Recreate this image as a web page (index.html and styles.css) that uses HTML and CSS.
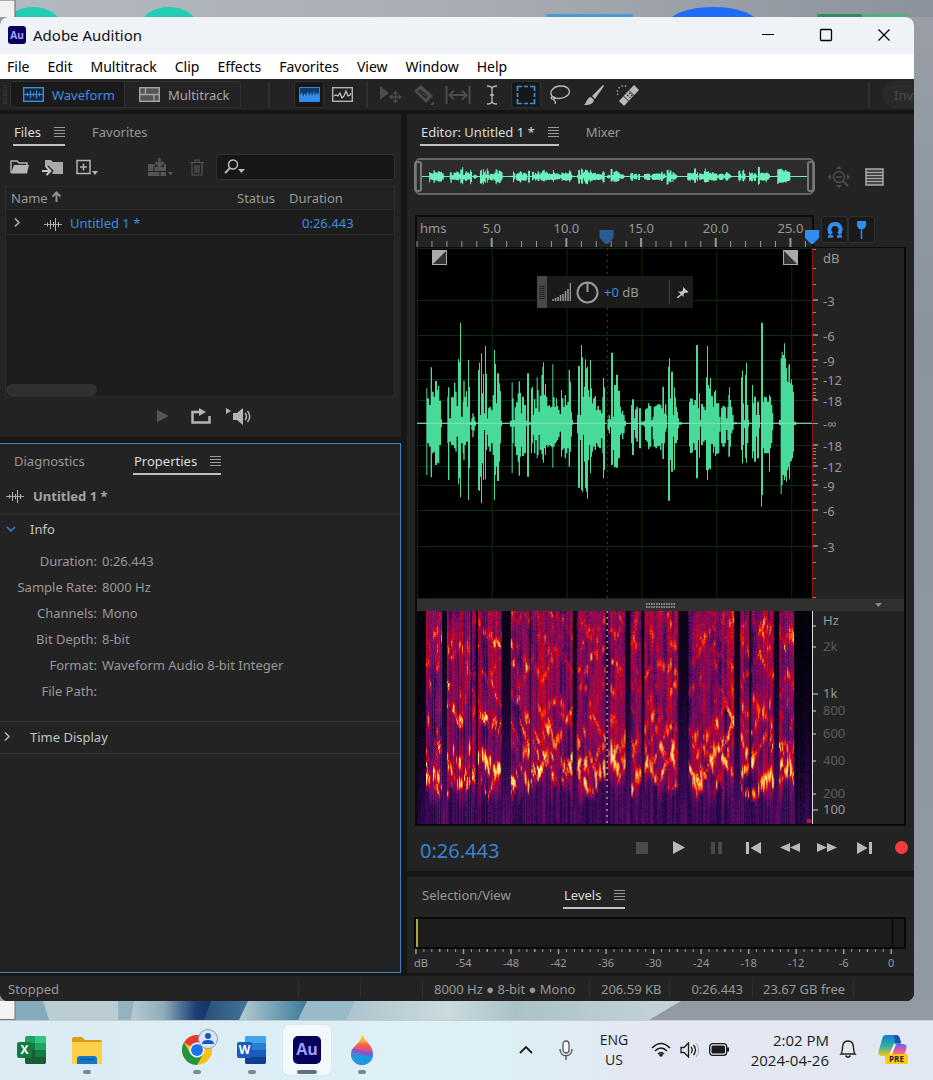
FILE: index.html
```html
<!DOCTYPE html>
<html lang="en">
<head>
<meta charset="utf-8">
<meta name="viewport" content="width=device-width, initial-scale=1">
<title>Adobe Audition</title>
<link rel="stylesheet" href="styles.css">
</head>
<body>
<svg width="0" height="0" class="defs" aria-hidden="true">
  <symbol id="menu" viewBox="0 0 11 11"><path d="M0 1.500h11M0 4.500h11M0 7.500h11M0 10.500h11" stroke="#999" stroke-width="1"/></symbol>
  <symbol id="wave" viewBox="0 0 18 14"><path d="M0 7.500h18" stroke="#a5a5a5"/><path d="M3.500 5.500v4M6.500 3v9M9.500 5v5M11.500 1v13M14.500 5v5" stroke="#b5b5b5" stroke-width="1"/></symbol>
</svg>
<div class="desktop-top" aria-hidden="true">
  <svg width="100%" height="17">
    <ellipse cx="33" cy="26" rx="28" ry="19" fill="#22cdb4"/><ellipse cx="169" cy="26" rx="28" ry="19" fill="#22cdb4"/>
    <rect x="-1" y="0" width="16" height="20" fill="#f1f1f1" stroke="#666"/>
    <rect x="546" y="14" width="87" height="6" rx="2" fill="#4a9bd5"/>
    <ellipse cx="713" cy="25" rx="46" ry="18" fill="#1f6cf8"/>
    <rect x="817" y="14" width="90" height="6" rx="2" fill="#49b07e"/><rect x="817" y="14" width="45" height="6" rx="2" fill="#2e8b60"/>
  </svg>
</div>
<main class="window">
  <header class="titlebar">
    <svg width="18" height="18" viewBox="0 0 18 18"><rect width="18" height="18" rx="3" fill="#08005c"/><text x="9" y="13" text-anchor="middle" class="au-small">Au</text></svg>
    <h1>Adobe Audition</h1>
    <div class="winbuttons">
      <button aria-label="Minimize"><svg width="14" height="14"><path d="M1 6.500h12" stroke="#000" stroke-width="1.200"/></svg></button>
      <button aria-label="Maximize"><svg width="14" height="14"><rect x="1.500" y="1.500" width="11" height="11" rx="1" fill="none" stroke="#000" stroke-width="1.300"/></svg></button>
      <button aria-label="Close"><svg width="14" height="14"><path d="M1.500 1.500l11 11M12.500 1.500l-11 11" stroke="#000" stroke-width="1.300"/></svg></button>
    </div>
  </header>
  <nav class="menubar"><button>File</button><button>Edit</button><button>Multitrack</button><button>Clip</button><button>Effects</button><button>Favorites</button><button>View</button><button>Window</button><button>Help</button></nav>
  <div class="toolbar">
    <svg width="4" height="20" class="grip"><path d="M1 0v20M3 0v20" stroke="#4a4a4a" stroke-dasharray="1 1"/></svg>
    <div class="modes">
      <button class="mode active"><svg width="21" height="15"><rect x=".7" y=".7" width="19.600" height="13.600" fill="#10243a" stroke="#3a8ee0" stroke-width="1.400"/><path d="M1 7.500h19M4.500 5.500v4M7.500 3.500v8M10.500 5.500v4M13.500 3.500v8M16.500 5.500v4" stroke="#3a8ee0" stroke-width="1.200"/></svg>Waveform</button>
      <button class="mode"><svg width="21" height="15"><rect x=".7" y=".7" width="19.600" height="13.600" fill="#555" stroke="#a5a5a5" stroke-width="1.400"/><path d="M1 7.500h19M6.500 1v6.500M15 7.500V14" stroke="#a5a5a5" stroke-width="1.400"/></svg>Multitrack</button>
    </div>
    <i class="vsep first"></i>
    <div class="views">
      <button class="tool active" aria-label="Spectral display"><svg width="21" height="15"><rect x=".5" y=".5" width="20" height="14" fill="#123a68" stroke="#2f84da"/><path d="M1 14V8l2-3 1 5 2-4 1 3 2-5 1 5 2-4 1 4 2-5 1 5 2-4 1 3 1-2v8z" fill="#2f8eef"/></svg></button>
      <button class="tool" aria-label="Pitch display"><svg width="21" height="15"><rect x=".7" y=".7" width="19.600" height="13.600" fill="#222" stroke="#b4b4b4" stroke-width="1.400"/><path d="M2 9l2-1 2 1 2-3 2 5 2-2 2-5 2 5 2-1 1-2" fill="none" stroke="#c8c8c8" stroke-width="1.200"/></svg></button>
    </div>
    <i class="vsep"></i>
    <div class="tools">
      <button class="tool" aria-label="Move"><svg width="24" height="20" viewBox="0 0 24 20"><path d="M2 1v14l9-7z" fill="#4c4c4c"/><path d="M17.500 7v10M12.500 12h10M15.500 9l2-2.500 2 2.500M15.500 15l2 2.500 2-2.500M14.500 10L12 12l2.500 2M20.500 10l2.500 2-2.500 2" fill="none" stroke="#4c4c4c" stroke-width="1.300"/></svg></button>
      <button class="tool" aria-label="Razor"><svg width="22" height="22" viewBox="0 0 22 22"><path d="M1 7l7-6 12 11-7 7z" fill="#4c4c4c"/><path d="M6 6.500l8 7" stroke="#232323" stroke-width="3"/><path d="M7 7.500l6 5" stroke="#4c4c4c"/><path d="M21 17v4h-4z" fill="#4c4c4c"/></svg></button>
      <button class="tool" aria-label="Slip"><svg width="26" height="20" viewBox="0 0 26 20"><path d="M1.500 1v18M24.500 1v18M5 10h16M9 5.500L4.500 10 9 14.500M17 5.500l4.500 4.500-4.500 4.500" fill="none" stroke="#4c4c4c" stroke-width="2"/></svg></button>
      <button class="tool" aria-label="Time selection"><svg width="12" height="20" viewBox="0 0 12 20"><path d="M1 1c3 0 5 1 5 3v12c0 2-2 3-5 3M11 1C8 1 6 2 6 4v12c0 2 2 3 5 3M4 10h4" fill="none" stroke="#b9b9b9" stroke-width="1.300"/></svg></button>
      <button class="tool active" aria-label="Marquee selection"><svg width="20" height="20" viewBox="0 0 20 20"><path d="M1.500 6V1.500H6M14 1.500h4.500V6M18.500 14v4.500H14M6 18.500H1.500V14M8 1.500h4M8 18.500h4M1.500 8v4M18.500 8v4" fill="none" stroke="#3a8ee0" stroke-width="1.700"/></svg></button>
      <button class="tool" aria-label="Lasso selection"><svg width="22" height="20" viewBox="0 0 22 20"><path d="M5 13C-2 8 4 1 12 1s12 7 4 11c-4 2-9 2-11 0-2-1-4 1-2 2s4-1 2-2M5 14c-1 2 3 2 1 5" fill="none" stroke="#b9b9b9" stroke-width="1.300"/></svg></button>
      <button class="tool" aria-label="Paintbrush"><svg width="22" height="22" viewBox="0 0 22 22"><path d="M20 1l1 1-9 13-3-3z" fill="#b9b9b9"/><path d="M8 13l3 3c-1 5-7 5-10 5 3-2 2-7 7-8z" fill="#b9b9b9"/></svg></button>
      <button class="tool" aria-label="Spot healing"><svg width="24" height="22" viewBox="0 0 24 22"><path d="M18 1l5 5L8 22l-5-5z" fill="#b9b9b9"/><path d="M7.500 12l5.500 5.500M13 6.500l5.500 5.500" stroke="#232323" stroke-width="1"/><path d="M11 11.500h1.500M13.500 13.500h1M13 9.500h1.500M15 11.500h1.500" stroke="#232323" stroke-width="1.500"/><path d="M2 11C-1 5 6-1 12 3" fill="none" stroke="#aaa" stroke-width="1.300" stroke-dasharray="1.500 2"/></svg></button>
    </div>
    <i class="vsep last"></i>
    <button class="pill">Inve</button>
  </div>

  <div class="workspace">
    <div class="column">
      <section class="panel files">
        <div class="tabs"><button class="tab active">Files <svg width="11" height="11"><use href="#menu"/></svg></button><button class="tab">Favorites</button></div>
        <div class="file-tools">
          <button aria-label="Open file"><svg width="20" height="16" viewBox="0 0 20 16"><path d="M1 14V2h6l2 2h8v2" fill="none" stroke="#b4b4b4" stroke-width="1.400"/><path d="M1 14.500L4 6h15l-2 8.500z" fill="#b4b4b4"/></svg></button>
          <button aria-label="Import file"><svg width="22" height="17" viewBox="0 0 22 17"><path d="M3 8V1h6l2 2h10v12H11z" fill="#a9a9a9"/><path d="M0 12h8M5 8l4 4-4 4" fill="none" stroke="#232323" stroke-width="4"/><path d="M0 12h7M4.500 8l4 4-4 4" fill="none" stroke="#c4c4c4" stroke-width="2"/></svg></button>
          <button aria-label="New file"><svg width="22" height="17" viewBox="0 0 22 17"><path d="M1 1.500h13v13H1zM7.500 4.500v7M4 8h7" fill="none" stroke="#b4b4b4" stroke-width="1.500"/><path d="M16 12h6l-3 4z" fill="#b4b4b4"/></svg></button>
          <button class="insert" aria-label="Insert into multitrack"><svg width="26" height="19" viewBox="0 0 26 19"><path d="M0 6h7v3h9V6h2v12H0z" fill="#555"/><path d="M0 13.500h18M6 8v5M12 13.500V18" stroke="#232323"/><path d="M11.500 0v7M7.500 4l4 4 4-4" fill="none" stroke="#555" stroke-width="2.500"/><path d="M20 14h5l-2.500 3.500z" fill="#555"/></svg></button>
          <button class="trash" aria-label="Delete"><svg width="14" height="17" viewBox="0 0 14 17"><path d="M0 3.500h14M5 3V1h4v2M2 4v12h10V4M5 6v8M7 6v8M9 6v8" fill="none" stroke="#555" stroke-width="1.200"/></svg></button>
          <label class="search"><svg width="22" height="16" viewBox="0 0 22 16"><circle cx="9" cy="5.500" r="4.500" fill="none" stroke="#b9b9b9" stroke-width="1.500"/><path d="M6 9l-5 5" stroke="#b9b9b9" stroke-width="1.800"/><path d="M14 10h7l-3.500 4z" fill="#b9b9b9"/></svg><input type="search" aria-label="Search files"></label>
        </div>
        <div class="filebox">
          <table>
            <thead><tr><th>Name<svg width="11" height="12" viewBox="0 0 11 12"><path d="M5.500 11V2M1.500 5.500l4-4 4 4" fill="none" stroke="#909090" stroke-width="2"/></svg></th><th class="c-status">Status</th><th class="c-dur">Duration</th></tr></thead>
            <tbody><tr><td><svg width="6" height="9" class="chev"><path d="M1 0.500l4 4-4 4" fill="none" stroke="#b5b5b5" stroke-width="1.500"/></svg><svg width="18" height="14"><use href="#wave"/></svg><span>Untitled 1 *</span></td><td></td><td class="dur">0:26.443</td></tr></tbody>
          </table>
          <div class="scroll-thumb"></div>
        </div>
        <div class="preview">
          <button class="play" aria-label="Play"><svg width="12" height="12"><path d="M0 0l12 6-12 6z" fill="#555"/></svg></button>
          <button aria-label="Loop"><svg width="20" height="16" viewBox="0 0 20 16"><path d="M6 4H1.500v10.500h17V8" fill="none" stroke="#b4b4b4" stroke-width="2.500"/><path d="M8 0l7 4-7 4zM4 2.800h6v2.500H4z" fill="#b4b4b4"/></svg></button>
          <button aria-label="Auto-play"><svg width="26" height="17" viewBox="0 0 26 17"><path d="M0 0l5 3-5 3zM7 5h4l6-5v17l-6-5H7z" fill="#b4b4b4"/><path d="M19 5q3 3.500 0 7M21.500 3q4.500 5.500 0 11" fill="none" stroke="#b4b4b4" stroke-width="1.500"/></svg></button>
        </div>
      </section>
      <section class="panel properties">
        <div class="tabs"><button class="tab diag">Diagnostics</button><button class="tab active">Properties <svg width="11" height="11"><use href="#menu"/></svg></button></div>
        <div class="prop-file"><svg width="18" height="14"><use href="#wave"/></svg><strong>Untitled 1 *</strong></div>
        <button class="fold"><svg width="10" height="6"><path d="M1 1l4 4 4-4" fill="none" stroke="#2f84da" stroke-width="1.500"/></svg>Info</button>
        <dl><dt>Duration:</dt><dd>0:26.443</dd><dt>Sample Rate:</dt><dd>8000 Hz</dd><dt>Channels:</dt><dd>Mono</dd><dt>Bit Depth:</dt><dd>8-bit</dd><dt>Format:</dt><dd>Waveform Audio 8-bit Integer</dd><dt>File Path:</dt><dd></dd></dl>
        <button class="fold time"><svg width="10" height="9"><path d="M1 .5l4 4-4 4" fill="none" stroke="#b5b5b5" stroke-width="1.500"/></svg>Time Display</button>
      </section>
    </div>

    <div class="column">
      <section class="panel editor">
        <div class="tabs"><button class="tab active">Editor: Untitled 1 * <svg width="11" height="11"><use href="#menu"/></svg></button><button class="tab">Mixer</button></div>
        <div class="split overview-row">
          <div class="overview"><svg id="overview" width="100%" height="33" viewBox="0 -180 1188 360" preserveAspectRatio="none"></svg><i class="handle left"></i><i class="handle right"></i></div>
          <div class="side">
            <button aria-label="Zoom out full"><svg width="22" height="22" viewBox="0 0 22 22"><circle cx="11" cy="11" r="5.500" fill="none" stroke="#4c4c4c" stroke-width="1.500"/><path d="M8 11h6" stroke="#4c4c4c" stroke-width="1.500"/><path d="M15 15l5 5" stroke="#4c4c4c" stroke-width="2"/><path d="M11 0l3 3H8zM11 22l3-3H8zM0 11l3-3v6zM22 11l-3-3v6z" fill="#4c4c4c"/></svg></button>
            <button aria-label="Track list"><svg width="19" height="18"><path d="M1 1h17v16H1z" fill="#484848" stroke="#aaa" stroke-width="1.500"/><path d="M1 4.500h17M1 7.500h17M1 10.500h17M1 13.500h17" stroke="#aaa"/></svg></button>
          </div>
        </div>
        <div class="split">
          <div class="ruler"><svg id="ruler" width="100%" height="30"></svg></div>
          <div class="side snap"><button aria-label="Snapping"><svg width="16" height="18" viewBox="0 0 16 18"><path d="M4.500 13C1 10 2 3 8 3S15 10 11.500 13" fill="none" stroke="#2f8eef" stroke-width="4"/><path d="M1 15.500h5M10 15.500h5" stroke="#2f8eef" stroke-width="2.500"/></svg></button><button aria-label="Playhead"><svg width="11" height="18"><path d="M1 0h9v5L8 8H3L1 5z" fill="#2f8eef"/><path d="M5.500 7v11" stroke="#2f8eef" stroke-width="1.500"/></svg></button></div>
        </div>
        <div class="stage">
          <div class="split">
            <div class="plot">
              <svg id="waveform" width="100%" height="351" viewBox="0 0 1188 1053" preserveAspectRatio="none"></svg>
              <svg class="fade in" width="15" height="15"><path d="M0 0h15v15H0z" fill="#aaa"/><path d="M14 1v13H1z" fill="#333"/></svg>
              <svg class="fade out" width="15" height="15"><path d="M0 0h15v15H0z" fill="#aaa"/><path d="M1 1v13h13z" fill="#333"/></svg>
              <div class="hud">
                <svg width="10" height="32"><rect width="10" height="32" fill="#484848"/><path d="M3.500 10v13M6.500 10v13" stroke="#111" stroke-width="2" stroke-dasharray="1 1"/></svg>
                <svg width="19" height="18"><path d="M1 18v-2M3.500 18v-3M6 18v-4M8.500 18v-6M11 18v-7M13.500 18v-10M16 18V6M18.500 18V0" stroke="#999" stroke-width="1.500"/></svg>
                <svg width="23" height="23"><circle cx="11.500" cy="11.500" r="10" fill="none" stroke="#999" stroke-width="2"/><path d="M11.500 2v9" stroke="#999" stroke-width="2"/></svg>
                <span><b>+0</b> dB</span><i></i>
                <svg width="12" height="12"><path d="M6 1l5.500 5-2 1-1.500-.5-1.500 1.500v3L2.500 7 1 5.500h3.500L6 4z" fill="#c5c5c5"/><path d="M5 8l-5 4" stroke="#c5c5c5" stroke-width="1.500"/></svg>
              </div>
            </div>
            <svg id="dbscale" class="scale" width="100%" height="351"></svg>
          </div>
          <div class="splitter"><svg width="30" height="5"><path d="M0 1h30M0 4h30" stroke="#aaa" stroke-width="1.500" stroke-dasharray="1.500 1"/></svg><svg class="drop" width="7" height="4"><path d="M0 0h7L3.500 4z" fill="#888"/></svg></div>
          <div class="split">
            <div class="spectro"><canvas id="spectrogram" width="396" height="213"></canvas></div>
            <svg id="hzscale" class="scale hz" width="100%" height="213"></svg>
          </div>
        </div>
        <div class="transport">
          <output>0:26.443</output>
          <div class="keys">
            <button aria-label="Stop"><svg width="12" height="12"><rect width="12" height="12" fill="#4a4a4a"/></svg></button>
            <button aria-label="Play"><svg width="12" height="13"><path d="M0 0l12 6.500L0 13z" fill="#b9b9b9"/></svg></button>
            <button aria-label="Pause"><svg width="11" height="12"><path d="M0 0h4v12H0zM7 0h4v12H7z" fill="#4a4a4a"/></svg></button>
            <button aria-label="To start"><svg width="15" height="12"><path d="M0 0h3v12H0zM15 0v12L4.500 6z" fill="#b9b9b9"/></svg></button>
            <button aria-label="Rewind"><svg width="20" height="9"><path d="M10 0v9L0 4.500zM20 0v9l-10-4.500z" fill="#b9b9b9"/></svg></button>
            <button aria-label="Fast forward"><svg width="20" height="9"><path d="M0 0l10 4.500L0 9zM10 0l10 4.500L10 9z" fill="#b9b9b9"/></svg></button>
            <button aria-label="To end"><svg width="15" height="12"><path d="M12 0h3v12h-3zM0 0l10.500 6L0 12z" fill="#b9b9b9"/></svg></button>
            <button aria-label="Record"><svg width="13" height="13"><circle cx="6.500" cy="6.500" r="6.500" fill="#f43c3c"/></svg></button>
          </div>
        </div>
      </section>
      <section class="panel levels">
        <div class="tabs"><button class="tab selview">Selection/View</button><button class="tab active">Levels <svg width="11" height="11"><use href="#menu"/></svg></button></div>
        <div class="meter"><i></i></div>
        <svg id="meterscale" width="100%" height="24"></svg>
      </section>
    </div>
  </div>
  <footer class="status"><span class="grow">Stopped</span><span class="blank"></span><span class="blank"></span><span class="fmt">8000 Hz ● 8-bit ● Mono</span><span class="size">206.59 KB</span><span class="len">0:26.443</span><span class="free">23.67 GB free</span><span class="tail"></span></footer>
</main>
<svg class="wallpaper" width="100%" height="19" viewBox="0 0 933 19" preserveAspectRatio="none" aria-hidden="true">
  <defs>
    <linearGradient id="navy" gradientUnits="userSpaceOnUse" x1="131" x2="212"><stop stop-color="#b7cbd0"/><stop offset=".4" stop-color="#8fabbc"/><stop offset=".8" stop-color="#1c4074"/><stop offset="1" stop-color="#123264"/></linearGradient>
    <linearGradient id="mid" gradientUnits="userSpaceOnUse" x1="206" x2="248"><stop stop-color="#2a507a"/><stop offset="1" stop-color="#44759a"/></linearGradient>
    <linearGradient id="teal" gradientUnits="userSpaceOnUse" x1="242" x2="306"><stop stop-color="#b0c8d0"/><stop offset="1" stop-color="#3f7c9b"/></linearGradient>
    <linearGradient id="pale" gradientUnits="userSpaceOnUse" x1="350" x2="680"><stop stop-color="#adc5cf"/><stop offset=".3" stop-color="#c9dbdc"/><stop offset=".5" stop-color="#a9c2c8"/><stop offset="1" stop-color="#c6d4d8"/></linearGradient>
  </defs>
  <path d="M0 0h933v19H0z" fill="#949aa2"/><path d="M0 0h46l6 19H0z" fill="#86abbd"/>
  <path d="M43 0h92v19H49z" fill="#b9cdd2"/><path d="M118 0h18v19h-18z" fill="#94b3c0"/>
  <path d="M134 0h90v19h-93z" fill="url(#navy)"/><path d="M211 0h50v19h-57z" fill="url(#mid)"/>
  <path d="M248 0h70v19h-79z" fill="url(#teal)"/><path d="M307 0h60v19h-69z" fill="#98bac9"/>
  <path d="M355 0h326l-32 19H346z" fill="url(#pale)"/>
  <path d="M-1-1h16v19.500H-1z" fill="#f3f3f3" stroke="#777"/>
</svg>
<nav class="taskbar">
  <div class="apps">
    <button aria-label="Excel"><svg width="30" height="28" viewBox="0 0 30 28"><rect x="8" width="21" height="28" rx="2" fill="#21a366"/><path d="M18 0h9q2 0 2 2v5H18z" fill="#33c481"/><path d="M8 7h10v7H8z" fill="#107c41"/><path d="M8 14h21v12q0 2-2 2H10q-2 0-2-2z" fill="#185c37"/><path d="M18 14h11v7H18z" fill="#107c41"/><rect y="6" width="15" height="16" rx="2" fill="#107c41"/><text x="7.500" y="18" text-anchor="middle" class="glyph">X</text></svg></button>
    <button class="running" aria-label="File Explorer"><svg width="30" height="27" viewBox="0 0 30 27"><path d="M0 2q0-2 2-2h8l3 3h15q2 0 2 2v6H0z" fill="#dc9c12"/><rect y="5" width="30" height="22" rx="1" fill="#fcd04a"/><path d="M5 27v-5q0-3 3-3h14q3 0 3 3v5z" fill="#1478c8"/><path d="M8 22.500h14" stroke="#0a5799" stroke-width="1.500"/></svg></button>
    <span class="slot"></span>
    <button class="running chrome" aria-label="Chrome"><svg width="36" height="36" viewBox="0 0 36 36"><circle cx="15" cy="21" r="15" fill="#fbc116"/><path d="M15 21L2 13.500A15 15 0 0 1 28 13.500H15z" fill="#e33b2e"/><path d="M2 13.500A15 15 0 0 0 15 36l6.500-11.300L15 21l-6.500 3.700z" fill="#229342"/><circle cx="15" cy="21" r="7.500" fill="#fff"/><circle cx="15" cy="21" r="6" fill="#1a73e8"/><circle cx="26" cy="10" r="9.500" fill="#d6e5fb" stroke="#8b9bb0"/><circle cx="26" cy="7" r="3" fill="#1758b8"/><path d="M20 15q0-4 6-4t6 4z" fill="#1758b8"/></svg></button>
    <button class="running" aria-label="Word"><svg width="30" height="28" viewBox="0 0 30 28"><rect x="8" width="21" height="28" rx="2" fill="#2b7cd3"/><path d="M10 0h17q2 0 2 2v5H8V2q0-2 2-2z" fill="#41a5ee"/><path d="M8 14h21v7H8z" fill="#185abd"/><path d="M8 21h21v5q0 2-2 2H10q-2 0-2-2z" fill="#103f91"/><rect y="6" width="15" height="16" rx="2" fill="#185abd"/><text x="7.500" y="18" text-anchor="middle" class="glyph">W</text></svg></button>
    <button class="running current" aria-label="Adobe Audition"><svg width="28" height="28"><rect width="28" height="28" rx="5" fill="#07005a"/><text x="14" y="19" text-anchor="middle" class="au-big">Au</text></svg></button>
    <button class="running" aria-label="Paint 3D"><svg width="24" height="32" viewBox="0 0 24 32"><defs><linearGradient id="drop" x2="0" y2="1"><stop stop-color="#ffcb2f"/><stop offset=".22" stop-color="#fdb437"/><stop offset=".34" stop-color="#f5604e"/><stop offset=".6" stop-color="#d84a8c"/></linearGradient></defs><path d="M12 0c2 7 11 11 11 20a11 11 0 0 1-22 0C1 12 12 9 12 0z" fill="url(#drop)"/><path d="M1 19c7-1 11 5 22-1 1 8-5 13-11 13S1 26 1 19z" fill="#1b98e0"/><path d="M2 17c8-2 11 5 20 2" fill="none" stroke="#8a58c6" stroke-width="4"/></svg></button>
  </div>
  <div class="tray">
    <button class="w40" aria-label="Show hidden icons"><svg width="14" height="9"><path d="M1 8l6-6 6 6" fill="none" stroke="#1b1b1b" stroke-width="1.800"/></svg></button>
    <button class="w40" aria-label="Microphone"><svg width="14" height="20"><rect x="4" y="1" width="6" height="12" rx="3" fill="#fff" stroke="#555" stroke-width="1.300"/><path d="M1 9c0 9 12 9 12 0M7 16v4" fill="none" stroke="#555" stroke-width="1.400"/></svg></button>
    <button class="lang">ENG<br>US</button>
    <button class="sys" aria-label="Network, volume and battery">
      <svg width="20" height="15"><path d="M1 6q9-9 18 0M4 9q6-6 12 0M7 12q3-3 6 0" fill="none" stroke="#1b1b1b" stroke-width="1.500"/><circle cx="10" cy="13" r="1.800" fill="#1b1b1b"/></svg>
      <svg width="20" height="16"><path d="M1 5.500h3L8.500 1v14L4 10.500H1z" fill="none" stroke="#1b1b1b" stroke-width="1.300"/><path d="M11 5q2.500 3 0 6M13.500 3q4 5 0 10" fill="none" stroke="#1b1b1b" stroke-width="1.300"/><path d="M16 1q5 7 0 14" fill="none" stroke="#aab" /></svg>
      <svg width="21" height="13"><rect x=".7" y=".7" width="17" height="11.600" rx="3" fill="none" stroke="#1b1b1b" stroke-width="1.300"/><rect x="2.500" y="2.500" width="13.500" height="8" rx="1.500" fill="#1b1b1b"/><path d="M19 4.500v4" stroke="#1b1b1b" stroke-width="2"/></svg>
    </button>
    <button class="clock"><time>2:02 PM<br>2024-04-26</time></button>
    <button class="w38" aria-label="Notifications"><svg width="18" height="19"><path d="M2 14c3-3-1-13 7-13s4 10 7 13zM6.500 15.500q2.500 3.500 5 0" fill="none" stroke="#222" stroke-width="1.400"/></svg></button>
    <button class="copilot" aria-label="Copilot preview"><svg width="30" height="29" viewBox="0 0 30 29"><defs><linearGradient id="ca" x2="0" y2="1"><stop stop-color="#1976df"/><stop offset=".5" stop-color="#29b0a5"/><stop offset="1" stop-color="#f1c21e"/></linearGradient><linearGradient id="cb" x2="0" y2="1"><stop stop-color="#6b62e8"/><stop offset=".5" stop-color="#e356b7"/><stop offset="1" stop-color="#f68a50"/></linearGradient></defs><path d="M8 0h10q3 0 4 4l1 5h-6l-4 8q-1 4-5 4H4q-5 0-3-6L4 4Q5 0 8 0z" fill="url(#ca)"/><path d="M16 0h2q3 0 4 4l1 4h-6z" fill="#1750b8"/><path d="M17 9h8q5 0 3 6l-2 6H12l3-9q1-3 2-3z" fill="url(#cb)"/><path d="M17 9l-5 12" stroke="#fff" stroke-width="2"/><rect x="7" y="19" width="23" height="10" rx="2" fill="#ffc914"/><text x="18.500" y="27" text-anchor="middle" class="pre">PRE</text></svg></button>
  </div>
</nav>
<script src="script.js"></script>
</body>
</html>
```

FILE: styles.css
```css
* { box-sizing: border-box; }
body {
  margin: 0; min-height: 100vh; display: flex; flex-direction: column; overflow-x: hidden;
  font-family: "Noto Sans", "Open Sans", sans-serif; font-size: 13px; line-height: 18px; color: #989898;
  background: linear-gradient(180deg, #9a9fa7, #8b939d 30%, #929aa3);
}
.defs { position: absolute; }
svg, canvas { display: block; flex: none; }
button { font: inherit; color: inherit; background: none; border: 0; padding: 0; margin: 0; }
.desktop-top { height: 17px; background: linear-gradient(90deg, #b3b9c1, #a9adb3 50%, #8b929b); }
.window { flex: 1; margin-right: 19px; display: flex; flex-direction: column; background: #161616; border-radius: 8px; overflow: hidden; }

.titlebar { height: 37px; display: flex; align-items: center; padding: 0 0 1px 8px; background: #eff3f8; color: #111; }
.titlebar h1 { margin: 0 0 0 7px; font: 400 15px/20px "Noto Sans", sans-serif; }
.winbuttons { margin-left: auto; display: flex; padding-right: 1px; }
.winbuttons button { width: 58px; height: 36px; display: grid; place-items: center; }
.au-small { font: bold 10px "Open Sans", sans-serif; fill: #a9a5ff; }
.au-big { font: bold 16px "Open Sans", sans-serif; fill: #9f9bff; }
.menubar { height: 25px; padding: 0 7px; display: flex; align-items: center; gap: 18px; background: #fff; color: #000; font: 14px/20px "Noto Sans", sans-serif; }

.toolbar { height: 31px; display: flex; align-items: center; background: #232323; overflow: hidden; }
.grip { margin-left: 3px; }
.modes { display: flex; margin-left: 3px; border: 1px solid #303030; border-radius: 3px; }
.mode { height: 25px; width: 115px; padding: 0 8px 0 14px; display: flex; align-items: center; gap: 8px; color: #a8a8a8; }
.mode.active { width: 114px; padding-left: 12px; background: #1a1a1a; color: #3a8ee0; border-right: 1px solid #303030; }
.vsep { width: 2px; height: 26px; background: #303030; }
.vsep.first { margin-left: 27px; }
.views { display: flex; gap: 3px; margin: 0 9px 0 24px; }
.tools { display: flex; margin-left: 7px; gap: 4px; }
.tool { width: 30px; height: 27px; display: grid; place-items: center; border: 1px solid transparent; border-radius: 3px; }
.tool.active { background: #171717; border-color: #303030; }
.vsep.last { margin-left: auto; }
.pill { width: 50px; height: 27px; margin: 0 -18px 0 12px; padding-left: 12px; text-align: left; border-radius: 14px; background: #2a2a2a; color: #4a4a4a; }

.workspace { flex: 1; display: grid; grid-template-columns: minmax(0, 401fr) minmax(0, 507fr); gap: 6px; padding: 4px 0 3px; }
.column { display: flex; flex-direction: column; gap: 6px; min-width: 0; }
.panel { background: #232323; min-width: 0; }
.tabs { display: flex; padding: 8px 13px 0; gap: 26px; }
.tab { height: 24px; display: flex; gap: 13px; align-items: center; padding: 0 0 3px 1px; border-bottom: 2px solid transparent; white-space: nowrap; }
.tab.active { color: #dcdcdc; border-color: #c0c0c0; }

.files { height: 323px; }
.file-tools { display: flex; align-items: center; padding: 8px 6px 0 10px; }
.file-tools button { margin-right: 12px; }
.file-tools .insert { margin: 0 16px 0 38px; }
.search { flex: 1; min-width: 0; height: 26px; display: flex; align-items: center; gap: 6px; padding: 0 7px; border: 1px solid #303030; border-radius: 3px; background: #171717; }
.search input { flex: 1; min-width: 0; border: 0; background: none; color: #ccc; font: inherit; }
.filebox { margin: 6px 6px 0 5px; height: 211px; position: relative; border: 1px solid #2c2c2c; background: #1d1d1d; }
.filebox table { width: 100%; border-collapse: collapse; table-layout: fixed; }
.filebox th { height: 22px; padding: 0 5px; text-align: left; font-weight: 400; background: #222; }
.filebox th svg { display: inline-block; vertical-align: 0; margin-left: 3px; }
.c-status { width: 52px; }
.c-dur { width: 110px; }
.filebox td { height: 25px; padding: 2px 0 0; border: solid #2a2a2a; border-width: 1px 0; color: #3a8ee0; }
.filebox td svg { display: inline-block; vertical-align: middle; margin: 0 8px 0 0; }
.filebox td .chev { margin: -4px 24px 0 8px; }
.filebox .dur { padding-left: 18px; }
.scroll-thumb { position: absolute; left: 0; bottom: 0; width: 91px; height: 12px; border-radius: 6px; background: #303030; }
.preview { display: flex; justify-content: center; align-items: center; gap: 15px; height: 38px; padding-left: 8px; }
.preview .play { margin-right: 7px; }

.properties { flex: 1; border: 1px solid #3b82c9; border-left: 0; }
.properties .tabs { padding-top: 7px; }
.diag { width: 94px; }
.prop-file { display: flex; align-items: center; gap: 9px; padding: 3px 6px 0; height: 40px; border-bottom: 2px solid #2d2d2d; color: #a4a4a4; }
.fold { width: 100%; display: flex; align-items: center; gap: 14px; height: 28px; padding: 0 6px; color: #c4c4c4; }
dl { display: grid; grid-template-columns: 97px 1fr; column-gap: 5px; grid-auto-rows: 26px; align-items: center; margin: 0; padding: 5px 0 17px; border-bottom: 1px solid #333; }
dt { text-align: right; }
dd { margin: 0; }
.fold.time { height: 32px; padding: 0 4px 2px; gap: 16px; border-bottom: 1px solid #333; }

.editor { padding: 0 8px; display: flex; flex-direction: column; height: 757px; }
.editor .tabs { padding-left: 5px; }
.split { display: grid; grid-template-columns: minmax(0, 1fr) 92px; }
.overview-row { margin-top: 12px; }
.overview { position: relative; height: 37px; border: 2px solid #666; border-radius: 5px; background: #2c2c2c; padding: 0 3px; }
.overview path { fill: #6df0bd; }
.handle { position: absolute; top: 1px; bottom: 1px; width: 8px; border: 2px solid #777; border-radius: 3px; }
.handle.left { left: -3px; }
.handle.right { right: -3px; }
.side { display: flex; align-items: center; gap: 15px; padding-left: 14px; }
.ruler { margin-top: 20px; border: 2px solid #0a0a0a; border-bottom: 0; height: 32px; padding: 0; }
.ruler svg { overflow: visible; position: relative; z-index: 2; }
.ruler svg, .scale, #meterscale { font-size: 13px; }
.ruler text, .scale text, #meterscale text { fill: #989898; }
#meterscale text { font-size: 11px; }
.snap { padding: 21px 0 0 7px; gap: 0; align-items: flex-start; }
.snap button { width: 27px; height: 27px; display: grid; place-items: center; background: #1a1a1a; border: 1px solid #303030; border-radius: 3px; }
.stage { border: 2px solid #0a0a0a; border-top-width: 1px; }
.stage .split { grid-template-columns: minmax(0, 1fr) 91px; }
.plot { position: relative; background: #000; }
.fade { position: absolute; top: 2px; }
.fade.in { left: 15px; }
.fade.out { right: 15px; }
.hud { position: absolute; left: 50%; top: 28px; width: 156px; height: 32px; transform: translateX(-50%); display: flex; align-items: center; gap: 5px; background: #1b1b1b; }
.hud b { color: #3a8ee0; font-weight: 400; }
.hud i { margin-left: auto; width: 1px; height: 24px; background: #444; }
.hud svg:last-child { margin: 0 4px 0 2px; }
.scale .dim { fill: #5c5c5c; }
.splitter { position: relative; height: 12px; display: grid; place-items: center; background: #303030; }
.splitter .drop { position: absolute; right: 22px; top: 4px; }
.spectro { background: #000; border-right: 1px solid #ddd; }
.spectro canvas { width: 100%; height: 213px; }
.transport { flex: 1; display: flex; align-items: center; justify-content: space-between; padding: 4px 0 0 5px; margin-right: -8px; }
.transport output { font-size: 20px; line-height: 28px; color: #3a82d0; }
.keys { margin-bottom: 6px; display: flex; align-items: center; gap: 11px; }
.keys button { width: 26px; height: 22px; display: grid; place-items: center; }

.levels { height: 96px; padding: 0 8px 0 7px; }
.levels .tabs { padding: 8px 7px 0; gap: 0; }
.selview { width: 142px; }
.meter { height: 32px; margin-top: 8px; border: 2px solid #080808; background: #1c1c1c; display: flex; justify-content: space-between; }
.meter::before { content: ""; width: 2px; background: #aaa83a; }
.meter i { width: 12px; border-left: 1px solid #000; }

.status { height: 25px; display: flex; align-items: center; background: #232323; }
.status span { height: 16px; line-height: 16px; border-right: 1px solid #303030; white-space: nowrap; }
.status .grow { flex: 1; padding-left: 8px; }
.status .blank { width: 62px; }
.status .fmt { width: 167px; padding-left: 11px; }
.status .size { width: 80px; padding-left: 11px; }
.status .len { width: 83px; text-align: right; padding-right: 9px; }
.status .free { width: 101px; padding-left: 10px; }
.status .tail { width: 60px; border: 0; }

.wallpaper { height: 19px; }
.taskbar { height: 60px; display: flex; justify-content: space-between; border-top: 1px solid #c4ccd4; background: linear-gradient(90deg, #dcebf4, #dcf1f5 52%, #e3e8f2 68%, #e2e8f1); color: #1c1c1c; }
.apps { display: flex; gap: 7px; padding: 4px 0 0 8px; }
.apps button, .slot { position: relative; width: 48px; height: 50px; display: grid; place-items: center; border-radius: 5px; }
.apps .chrome { padding: 0 0 6px 6px; }
.apps .running::after { content: ""; position: absolute; bottom: 1px; left: 20px; width: 8px; height: 4px; border-radius: 2px; background: #7b8a92; }
.apps .current { background: #f3f8fc; box-shadow: 0 0 1px #aab; }
.apps .current::after { left: 14px; width: 20px; background: #5d7480; }
.glyph { font: bold 12px "Open Sans", sans-serif; fill: #fff; }
.pre { font: bold 8px "Open Sans", sans-serif; fill: #222; }
.tray { display: flex; align-items: center; padding-right: 14px; font: 15px/20px "Open Sans", sans-serif; }
.tray button { height: 48px; margin-bottom: 2px; display: grid; place-items: center; }
.tray .w40 { width: 40px; }
.tray .w38 { width: 38px; }
.tray .lang { width: 56px; font-size: 14px; }
.tray .sys { width: 96px; display: flex; align-items: center; justify-content: center; gap: 9px; }
.tray .clock { width: 91px; justify-items: end; text-align: right; }
.tray .copilot { width: 52px; }
```

FILE: script.js
```js
const NS = 'http://www.w3.org/2000/svg';
const add = (parent, tag, attrs, text) => {
  const node = document.createElementNS(NS, tag);
  for (const key in attrs) node.setAttribute(key, attrs[key]);
  if (text !== undefined) node.textContent = text;
  parent.appendChild(node);
};
const byId = id => document.getElementById(id);

// Peaks: start, end, height above and below the zero line, in thirds of a pixel.
const parse = (s, shift) => s.trim().split(/\s+/).map(p => {
  const [a, b, u, d] = p.split(',').map(Number);
  return [a + shift, b + shift, u, d];
});
const peaks = parse(`
49,52,105,155 52,57,75,60 57,62,55,70 62,66,168,162 66,71,95,90 71,75,80,85 75,81,127,125 81,84,100,118 84,88,112,120 88,93,68,65 93,96,12,12
112,114,80,60 114,118,108,170 118,123,15,55 123,132,78,65 132,136,122,75 136,140,95,85 140,144,52,40 144,147,193,183 147,150,185,165 150,153,302,222 153,158,20,60 158,160,65,90 160,164,128,110 164,168,80,65 168,171,97,55 171,174,50,55 174,177,190,230 177,180,110,135 180,184,5,5 184,187,15,20 187,191,30,42 191,194,20,22 194,198,6,8
204,207,160,200 207,210,182,203 210,213,25,160 213,216,210,240 216,219,90,120 219,222,148,170 222,225,30,20 225,228,232,168 228,231,148,80 231,234,15,35 234,238,45,70 238,243,50,85 243,248,40,60 248,252,85,95 252,255,220,230 255,258,178,155 258,261,60,130 261,267,150,173 267,270,120,115 270,273,97,60 273,276,8,8
300,305,8,10 305,308,123,150 308,311,75,60 311,314,10,10 314,318,48,70 318,323,63,95 323,326,90,115 326,330,126,157 330,333,92,100 333,336,30,70 336,342,80,98 342,348,55,90 348,351,8,8 351,357,150,160 357,362,4,6 363,366,105,90 366,369,110,60 369,372,25,35 372,376,73,90 376,380,45,50 380,383,138,105 383,386,100,95 386,389,35,35 389,394,83,80 394,397,145,92 397,399,170,110 399,402,183,118 402,405,85,75 405,408,118,95 408,412,80,65 412,416,52,72 416,420,55,65 420,424,48,68 424,427,50,72 427,430,177,133 430,434,78,70 434,438,50,60 438,441,75,55 441,445,52,50 445,449,40,42 449,453,28,25 453,456,100,100 456,460,75,80 460,464,50,75 464,468,85,105 468,472,55,90 472,476,65,75 476,480,160,130 480,483,125,85 483,486,35,40 486,489,10,5
501,504,25,30 504,510,172,193 510,513,25,50 513,516,235,200 516,519,198,205 519,522,80,35 522,525,110,115 525,528,192,195 528,531,165,205 531,534,170,226 534,537,100,110 537,540,80,65 540,543,190,150 543,546,105,100 546,549,60,85 549,554,75,70 554,558,82,80 558,562,40,60 562,567,52,70 567,573,40,75 573,577,30,45 577,579,80,90 579,582,136,165 582,585,108,140
592,596,12,20 596,600,25,30 600,603,12,12 603,609,212,125 609,612,20,80 612,618,115,132 618,624,146,133 624,630,98,105 630,633,50,35 633,636,30,30 636,640,38,48 640,644,25,30 644,648,8,8
663,666,55,60 666,672,72,95 672,675,15,20 675,679,42,45 679,684,50,55 687,693,45,75 693,701,5,5 701,705,8,10 705,709,42,50 709,714,45,55 714,718,60,78 718,724,52,70 724,728,10,10 728,731,20,48 731,736,50,70 736,741,53,75 741,750,57,68`, -21).concat(parse(`
60,64,55,80 64,67,45,60 67,72,110,107 72,75,30,60 75,79,57,25 79,81,25,15 84,87,170,232 87,90,195,232 90,93,75,110 93,99,155,145 99,102,25,40 102,105,108,140 105,108,78,60 108,111,50,60 111,114,35,50 114,117,15,15 117,125,4,4
147,150,65,70 150,155,75,90 155,159,73,87 159,163,55,60 163,168,70,80 168,174,235,165 174,177,45,50 177,180,90,103 180,183,10,10 183,189,58,65 189,194,50,55 194,198,40,50 198,201,138,140 201,204,232,170 204,207,115,140 207,210,105,135 210,213,137,138 213,219,83,62 219,222,50,90 222,225,95,70 225,228,100,98 228,232,60,92 232,238,60,90 238,242,20,25 243,247,45,60 247,254,52,70 254,258,48,60 258,262,15,20 262,265,50,50 265,267,85,100 267,270,108,100 270,273,70,70 273,277,50,30 277,281,25,20 281,291,3,3
303,306,138,80 306,309,158,120 309,312,60,65 312,315,10,15 315,318,145,105 318,321,182,118 321,325,55,60 325,327,10,10 336,339,115,105 339,342,60,85 342,348,80,115 348,351,25,40 351,357,65,105 357,360,25,15 363,366,302,250 366,369,302,215 369,372,65,75 372,376,80,90 376,381,78,90 381,387,65,90 387,390,85,145 390,393,80,75 393,397,55,60 397,400,30,20
417,422,10,5 422,425,195,213 425,428,215,185 428,432,205,155 432,435,240,170 435,438,195,160 438,441,165,175 441,445,125,140 445,447,175,130 447,450,178,168 450,453,120,115 453,456,132,112 456,459,115,105 459,462,95,85 462,469,5,5`, 669));
const wavePath = (mid, k, scale) => `M0 ${mid - k}H1188V${mid + k}H0Z` +
  peaks.map(([a, b, u, d]) => `M${a} ${mid - scale(u)}H${b}V${mid + scale(d)}H${a}Z`).join('');

const END = 26.443;
const dbLines = [52, 87, 112, 131, 152, 197, 218, 237, 262, 298];
const wf = byId('waveform');
const grid = y => add(wf, 'path', { d: `M0 ${y * 3}H1188`, stroke: '#0b2c0e', 'stroke-width': 3 });
[.5, ...dbLines.map(y => y + .5), 350.5].forEach(grid);
for (let s = 0; s <= 25; s += 5) add(wf, 'path', { d: `M${s / END * 1188 + 1} 0V1053`, stroke: '#0b2c0e', 'stroke-width': 3 });
add(wf, 'path', { d: wavePath(526, 1.5, v => v), fill: '#48da98' });
add(wf, 'path', { d: 'M0 526H1188', stroke: '#a3e8c2', 'stroke-width': 2 });
add(wf, 'path', { d: 'M571 0V1053', stroke: '#a01414', 'stroke-width': 3, 'stroke-dasharray': '6 12' });
add(wf, 'path', { d: 'M1186 0V1053', stroke: '#b01818', 'stroke-width': 3 });
add(byId('overview'), 'path', { d: wavePath(0, 6, v => 1.9 * v ** .7) });

const ruler = byId('ruler');
for (let s = 0; s <= 26; s++) {
  const x = s / END * 100 + '%', major = s && s % 5 === 0;
  add(ruler, 'line', { x1: x, x2: x, y1: major ? 21 : 24, y2: 30, stroke: '#999', 'stroke-width': major ? 2 : 1 });
  if (major) add(ruler, 'text', { x, y: 16, 'text-anchor': 'middle' }, s.toFixed(1));
}
add(ruler, 'text', { x: 3, y: 16 }, 'hms');
for (const [x, fill] of [['48%', '#285c94'], ['100%', '#2f8eef']]) {
  const holder = document.createElementNS(NS, 'svg');
  holder.setAttribute('x', x);
  holder.setAttribute('overflow', 'visible');
  add(holder, 'path', { d: 'M-7 13H7V21L1 27H-1L-7 21Z', fill });
  ruler.appendChild(holder);
}

const db = byId('dbscale');
add(db, 'text', { x: 10, y: 15 }, 'dB');
['-3', '-6', '-9', '-12', '-18', '-18', '-12', '-9', '-6', '-3'].forEach((t, i) => {
  add(db, 'line', { x1: 0, x2: 5, y1: dbLines[i], y2: dbLines[i], stroke: '#999', 'stroke-width': 1.5 });
  add(db, 'text', { x: 10, y: dbLines[i] + 6 }, t);
});
add(db, 'line', { x1: 0, x2: 5, y1: 175.5, y2: 175.5, stroke: '#999' });
add(db, 'text', { x: 10, y: 181 }, '-∞');
[1, 20, 36, 64, 76, 96, 104, 118, 124, 136, 140, 144, 147, 150].forEach(y => {
  for (const yy of [y, 350 - y]) add(db, 'line', { x1: 0, x2: 3, y1: yy + .5, y2: yy + .5, stroke: '#888' });
});
const hz = byId('hzscale');
[['Hz', 10], ['2k', 36], ['1k', 83], ['800', 100], ['600', 123], ['400', 150], ['200', 183], ['100', 199]].forEach(([t, y], i) => {
  add(hz, 'text', { x: 10, y: y + 4, class: [0, 2, 7].includes(i) ? '' : 'dim' }, t);
  add(hz, 'line', { x1: 0, x2: i === 2 || i === 7 ? 5 : 3, y1: i ? y : 15, y2: i ? y : 15, stroke: '#999', 'stroke-width': 1.5 });
});

const meter = byId('meterscale');
for (let v = 0; v <= 60; v++) {
  const x = .4 + v / 60 * 96.6 + '%', major = v % 6 === 0;
  add(meter, 'line', { x1: x, x2: x, y1: 0, y2: major ? 5 : 3, stroke: '#999', 'stroke-width': major || v % 3 === 0 ? 1.5 : 1 });
  if (major) add(meter, 'text', { x: v ? x : 0, y: 18, 'text-anchor': v ? 'middle' : 'start' }, v ? String(v - 60) : 'dB');
}

// Spectrogram: noise floor per column, plus formant tracks and slanted harmonics.
const W = 396, H = 213, ctx = byId('spectrogram').getContext('2d');
let seed = 71;
const rnd = () => (seed = (seed * 1664525 + 1013904223) >>> 0) / 4294967296;
const env = new Float32Array(W), part = new Int16Array(W), mix = new Float32Array(W * H);
for (const [a, b, u, d] of peaks) {
  if (u + d < 36) continue;
  for (let x = Math.floor(a / 3); x <= Math.ceil(b / 3) && x < W; x++) env[x] = Math.max(env[x], Math.min(1, .6 + (u + d) / 700));
}
for (let x = 1; x < W; x++) part[x] = part[x - 1] + (!env[x - 1] !== !env[x] || rnd() < .05 ? 1 : 0);
const hash = (a, b) => { const s = Math.sin(a * 127.1 + b * 311.7) * 43758.5453; return s - Math.floor(s); };
const coarse = (x, y) => {
  const gx = Math.floor(x), gy = Math.floor(y), fx = x - gx, fy = y - gy;
  const top = hash(gx, gy) * (1 - fx) + hash(gx + 1, gy) * fx;
  const low = hash(gx, gy + 1) * (1 - fx) + hash(gx + 1, gy + 1) * fx;
  return top * (1 - fy) + low * fy;
};
for (let x = 0; x < W; x++) {
  const tone = rnd(), gap = rnd();
  for (let y = 0; y < H; y++) {
    const low = y / H, i = y * W + x;
    const floor = 172 + 12 * Math.sin(part[x] * 2.3 + x / 5);
    const fade = Math.max(0, Math.min(1, (floor + 14 - y) / 18));
    if (env[x]) {
      const body = .13 + tone * .24 + coarse(x / 4, y / 24) * .27 + (rnd() - .5) * .13 + Math.max(0, 1 - y / 120) * rnd() ** 5 * .2;
      const under = .16 + tone * .16 + (rnd() - .5) * .08;
      mix[i] = body * fade + under * (1 - fade);
    } else {
      const edge = x < 10 || x > 378;
      mix[i] = (edge ? .02 : .07) + low * low * (edge ? .1 : .17) + gap * low * .12 + (rnd() - .5) * .07;
    }
  }
}
const tracks = [[163, .58], [160, .5], [132, .42], [112, .36], [86, .3], [62, .3], [34, .3], [12, .26]];
const dot = (x, y, v) => {
  x = Math.round(x); y = Math.round(y);
  if (x >= 0 && x < W && y >= 0 && y < H && env[x]) mix[y * W + x] += v;
};
for (let n = 0; n < 2500; n++) {
  const x0 = Math.floor(rnd() * W);
  if (!env[x0]) continue;
  const k = Math.floor(rnd() ** 1.2 * tracks.length), p = part[x0];
  const [base, strength] = tracks[k];
  const drift = (hash(p, k) - .5) * 30 + Math.sin(x0 / 4 + hash(k, p) * 6) * 11;
  const y0 = base + drift + (rnd() - .5) * 8;
  const len = 5 + rnd() * (k < 4 ? 15 : 10);
  const slope = (hash(p + 7, k) - .4) * .5;
  const power = strength * (.4 + rnd() * .9) * env[x0] * (.45 + coarse(x0 / 4, y0 / 11));
  for (let t = -len / 2; t < len / 2; t++) {
    const shape = 1 - Math.abs(t) / len * 1.6;
    dot(x0 + t * slope, y0 + t, power * shape);
    dot(x0 + 1 + t * slope, y0 + t, power * shape * .3);
  }
}
const stops = [[0, 0, 0, 4], [.1, 16, 4, 32], [.2, 46, 8, 78], [.32, 98, 14, 104], [.43, 145, 8, 84], [.54, 190, 4, 40], [.66, 232, 16, 12], [.78, 255, 80, 8], [.9, 255, 170, 50], [1, 255, 235, 150]];
const img = ctx.createImageData(W, H);
for (let i = 0; i < W * H; i++) {
  const v = Math.max(0, Math.min(.99, mix[i] > .8 ? .8 + (mix[i] - .8) * .4 : mix[i]));
  let k = 0;
  while (stops[k + 1][0] <= v) k++;
  const f = (v - stops[k][0]) / (stops[k + 1][0] - stops[k][0]);
  for (let c = 0; c < 3; c++) img.data[i * 4 + c] = stops[k][c + 1] + f * (stops[k + 1][c + 1] - stops[k][c + 1]);
  img.data[i * 4 + 3] = 255;
}
ctx.putImageData(img, 0, 0);
ctx.fillStyle = '#d8d8d8';
for (let y = 0; y < H; y += 6) ctx.fillRect(190, y, 1, 2);
ctx.fillStyle = '#d01030';
ctx.fillRect(391, 208, 4, 4);
```
